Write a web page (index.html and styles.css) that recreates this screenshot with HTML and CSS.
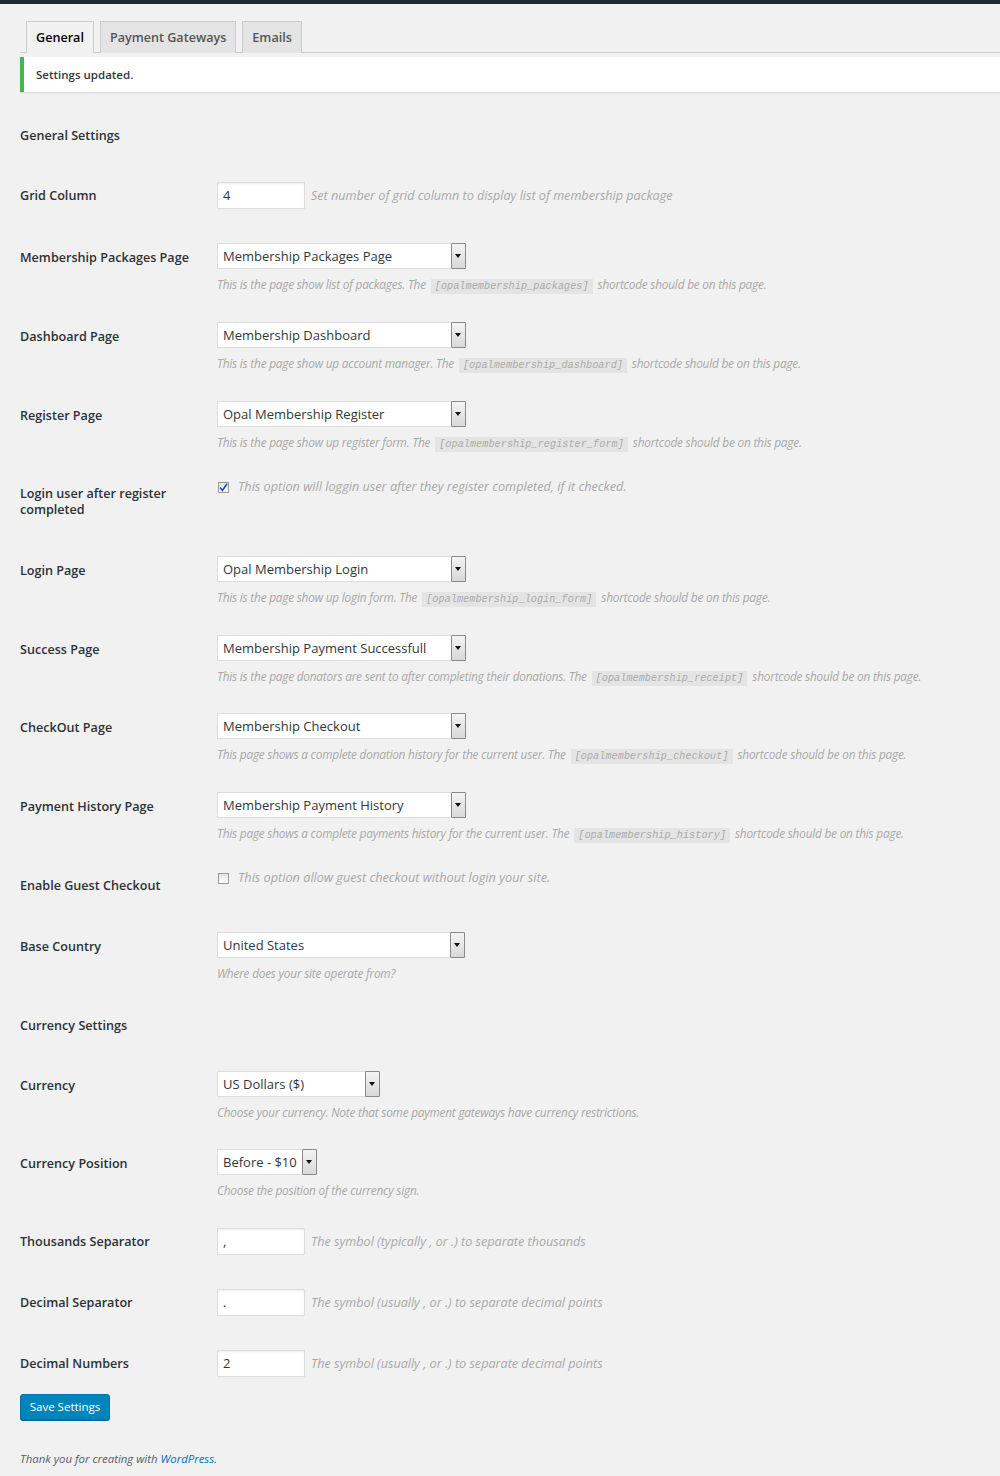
FILE: index.html
```html
<!DOCTYPE html>
<html>
<head>
<meta charset="utf-8">
<link rel="stylesheet" href="styles.css">
</head>
<body>
<div class="topbar"></div>
<div class="wrap">
  <div class="tabs">
    <span class="tab active">General</span>
    <span class="tab">Payment Gateways</span>
    <span class="tab">Emails</span>
  </div>
  <div class="notice">Settings updated.</div>

  <div class="row heading first"><div class="label">General Settings</div></div>

  <div class="row input-row tall">
    <div class="label">Grid Column</div>
    <div class="field inline"><span class="input">4</span><span class="desc-inline">Set number of grid column to display list of membership package</span></div>
  </div>

  <div class="row">
    <div class="label">Membership Packages Page</div>
    <div class="field">
      <div class="select w248"><span class="val">Membership Packages Page</span><span class="arrow"></span></div>
      <div class="desc">This is the page show list of packages. The <code>[opalmembership_packages]</code> shortcode should be on this page.</div>
    </div>
  </div>

  <div class="row">
    <div class="label">Dashboard Page</div>
    <div class="field">
      <div class="select w248"><span class="val">Membership Dashboard</span><span class="arrow"></span></div>
      <div class="desc">This is the page show up account manager. The <code>[opalmembership_dashboard]</code> shortcode should be on this page.</div>
    </div>
  </div>

  <div class="row">
    <div class="label">Register Page</div>
    <div class="field">
      <div class="select w248"><span class="val">Opal Membership Register</span><span class="arrow"></span></div>
      <div class="desc">This is the page show up register form. The <code>[opalmembership_register_form]</code> shortcode should be on this page.</div>
    </div>
  </div>

  <div class="row check-row two">
    <div class="label">Login user after register completed</div>
    <div class="field check"><span class="checkbox checked"><svg width="9" height="9" viewBox="0 0 9 9"><path d="M1 4.5 L3.5 7.5 L8 0.8" fill="none" stroke="#1e4c9e" stroke-width="1.6"/></svg></span><span class="check-text">This option will loggin user after they register completed, if it checked.</span></div>
  </div>

  <div class="row">
    <div class="label">Login Page</div>
    <div class="field">
      <div class="select w248"><span class="val">Opal Membership Login</span><span class="arrow"></span></div>
      <div class="desc">This is the page show up login form. The <code>[opalmembership_login_form]</code> shortcode should be on this page.</div>
    </div>
  </div>

  <div class="row short">
    <div class="label">Success Page</div>
    <div class="field">
      <div class="select w248"><span class="val">Membership Payment Successfull</span><span class="arrow"></span></div>
      <div class="desc">This is the page donators are sent to after completing their donations. The <code>[opalmembership_receipt]</code> shortcode should be on this page.</div>
    </div>
  </div>

  <div class="row">
    <div class="label">CheckOut Page</div>
    <div class="field">
      <div class="select w248"><span class="val">Membership Checkout</span><span class="arrow"></span></div>
      <div class="desc">This page shows a complete donation history for the current user. The <code>[opalmembership_checkout]</code> shortcode should be on this page.</div>
    </div>
  </div>

  <div class="row">
    <div class="label">Payment History Page</div>
    <div class="field">
      <div class="select w248"><span class="val">Membership Payment History</span><span class="arrow"></span></div>
      <div class="desc">This page shows a complete payments history for the current user. The <code>[opalmembership_history]</code> shortcode should be on this page.</div>
    </div>
  </div>

  <div class="row check-row">
    <div class="label">Enable Guest Checkout</div>
    <div class="field check"><span class="checkbox"></span><span class="check-text">This option allow guest checkout without login your site.</span></div>
  </div>

  <div class="row">
    <div class="label">Base Country</div>
    <div class="field">
      <div class="select w247"><span class="val">United States</span><span class="arrow"></span></div>
      <div class="desc">Where does your site operate from?</div>
    </div>
  </div>

  <div class="row heading"><div class="label">Currency Settings</div></div>

  <div class="row short">
    <div class="label">Currency</div>
    <div class="field">
      <div class="select w162"><span class="val">US Dollars ($)</span><span class="arrow"></span></div>
      <div class="desc">Choose your currency. Note that some payment gateways have currency restrictions.</div>
    </div>
  </div>

  <div class="row short">
    <div class="label">Currency Position</div>
    <div class="field">
      <div class="select w99"><span class="val">Before - $10</span><span class="arrow"></span></div>
      <div class="desc">Choose the position of the currency sign.</div>
    </div>
  </div>

  <div class="row input-row">
    <div class="label">Thousands Separator</div>
    <div class="field inline"><span class="input">,</span><span class="desc-inline">The symbol (typically , or .) to separate thousands</span></div>
  </div>

  <div class="row input-row">
    <div class="label">Decimal Separator</div>
    <div class="field inline"><span class="input">.</span><span class="desc-inline">The symbol (usually , or .) to separate decimal points</span></div>
  </div>

  <div class="row input-row last">
    <div class="label">Decimal Numbers</div>
    <div class="field inline"><span class="input">2</span><span class="desc-inline">The symbol (usually , or .) to separate decimal points</span></div>
  </div>

  <div class="submit"><span class="button">Save Settings</span></div>

  <div class="footer">Thank you for creating with <a href="#">WordPress</a>.</div>
</div>
</body>
</html>
```

FILE: styles.css
```css
html, body {
  margin: 0;
  padding: 0;
  background: #f1f1f1;
}
body {
  font-family: "Open Sans", "Liberation Sans", sans-serif;
  color: #23282d;
  font-size: 13px;
}
.topbar {
  height: 4px;
  background: #23282d;
}
.wrap {
  padding-left: 20px;
}
.tabs {
  display: flex;
  padding-top: 17px;
  padding-left: 6px;
  gap: 6px;
  border-bottom: 1px solid #cccccc;
  height: 31px;
  align-items: flex-end;
}
.tab {
  box-sizing: border-box;
  height: 32px;
  margin-bottom: -1px;
  padding: 6px 9px 0;
  font-size: 12.6px;
  font-weight: 600;
  line-height: 20px;
  color: #555555;
  background: #e4e4e4;
  border: 1px solid #cccccc;
  border-bottom: none;
}
.tab.active {
  background: #f1f1f1;
  color: #000000;
  border-bottom: 1px solid #f1f1f1;
}
.notice {
  margin-top: 4px;
  background: #ffffff;
  border-left: 4px solid #46b450;
  box-shadow: 0 1px 1px rgba(0,0,0,0.1);
  height: 35px;
  line-height: 35px;
  padding-left: 12px;
  font-size: 11.5px;
  font-weight: 600;
  color: #32373c;
}
.row {
  display: flex;
  align-items: flex-start;
}
.row.heading {
  height: 60px;
}
.row.heading.first {
  margin-top: 15px;
}
.label {
  width: 197px;
  flex: none;
  box-sizing: border-box;
  padding-top: 20px;
  padding-right: 10px;
  font-size: 12.6px;
  font-weight: 600;
  line-height: 18px;
  color: #2c3136;
}
.field {
  padding-top: 14px;
  padding-bottom: 15px;
}
.row.short .field {
  padding-bottom: 14px;
}
.row.input-row .field {
  padding-top: 15px;
  padding-bottom: 19px;
}
.row.input-row.tall .field {
  padding-bottom: 20px;
}
.row.input-row.last .field {
  padding-bottom: 17px;
}
.field.inline {
  display: flex;
  align-items: center;
  height: 27px;
}
.input {
  box-sizing: border-box;
  width: 88px;
  height: 27px;
  background: #ffffff;
  border: 1px solid #dddddd;
  box-shadow: inset 0 1px 2px rgba(0,0,0,0.07);
  padding-left: 5px;
  font-size: 13px;
  line-height: 25px;
  color: #32373c;
}
.desc-inline {
  margin-left: 6px;
  font-style: italic;
  font-size: 12.6px;
  color: #a8a8a8;
}
.select {
  box-sizing: border-box;
  height: 26px;
  display: flex;
  background: #ffffff;
  border: 1px solid #dddddd;
  border-right: none;
}
.select.w248 { width: 249px; }
.select.w247 { width: 248px; }
.select.w162 { width: 163px; }
.select.w99 { width: 100px; }
.select .val {
  flex: 1;
  padding-left: 5px;
  font-size: 13px;
  line-height: 24px;
  color: #32373c;
  white-space: nowrap;
  overflow: hidden;
}
.select .arrow {
  box-sizing: border-box;
  flex: none;
  width: 15px;
  height: 26px;
  margin-top: -1px;
  border: 1px solid #8a8a8a;
  border-radius: 1px;
  background: linear-gradient(#f4f4f4, #d8d8d8);
  position: relative;
}
.select .arrow::after {
  content: "";
  position: absolute;
  left: 3px;
  top: 10px;
  border-left: 3.5px solid transparent;
  border-right: 3.5px solid transparent;
  border-top: 4px solid #111111;
}
.desc {
  margin-top: 6px;
  height: 18px;
  overflow: visible;
  font-style: italic;
  font-size: 11.8px;
  line-height: 18px;
  letter-spacing: -0.2px;
  color: #a8a8a8;
  white-space: nowrap;
}
code {
  font-family: "Liberation Mono", "DejaVu Sans Mono", monospace;
  font-style: italic;
  font-size: 10.1px;
  line-height: 14px;
  letter-spacing: 0.1px;
  background: #e4e4e4;
  color: #aaaaaa;
  padding: 2px 4px;
  margin: 0 2px;
}
.row.check-row .field {
  padding-top: 15px;
  padding-bottom: 0;
  height: 46px;
  box-sizing: content-box;
}
.row.check-row.two .field {
  height: 61px;
}
.row.check-row.two .label {
  line-height: 16px;
  padding-bottom: 20px;
}
.field.check {
  display: flex;
  align-items: flex-start;
}
.checkbox {
  box-sizing: border-box;
  width: 11px;
  height: 11px;
  margin-left: 1px;
  margin-top: 1px;
  border: 1px solid #9a9a9a;
  background: linear-gradient(#e4e4e4, #ffffff);
  display: flex;
  align-items: center;
  justify-content: center;
}
.checkbox svg {
  display: block;
}
.check-text {
  margin-left: 9px;
  margin-top: -4px;
  font-style: italic;
  font-size: 12.7px;
  line-height: 18px;
  color: #a8a8a8;
}
.button {
  display: inline-block;
  box-sizing: border-box;
  height: 26px;
  width: 90px;
  text-align: center;
  background: #0085ba;
  border: 1px solid #0073aa;
  border-radius: 3px;
  box-shadow: 0 1px 0 #006799;
  color: #ffffff;
  font-size: 11.5px;
  line-height: 24px;
}
.footer {
  margin-top: 31px;
  padding-left: 0;
  font-style: italic;
  font-size: 11.4px;
  color: #555d66;
}
.footer a {
  color: #0073aa;
  text-decoration: none;
}
```
